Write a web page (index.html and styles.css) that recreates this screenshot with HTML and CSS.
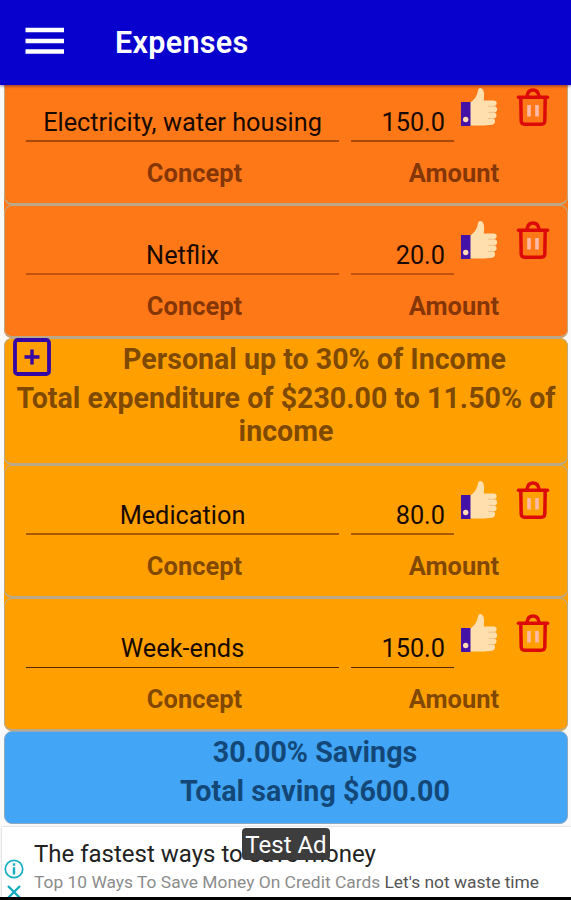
FILE: index.html
```html
<!DOCTYPE html>
<html lang="en">
<head>
<meta charset="utf-8">
<title>Expenses</title>
<link rel="stylesheet" href="styles.css">
</head>
<body>
<svg class="defs" width="0" height="0">
  <symbol id="thumb" viewBox="0 0 38 40">
    <path fill="#ffdfae" d="M10 15.5 C14 13 17 10 18 3 Q18.4 1 20.5 1 C24.5 1.5 24.5 8 23.7 13.5 H34 Q37 14 36.7 16.5 Q36.4 18.6 34.5 19 Q37.4 20 37.2 22.6 Q37 25 34.8 25.4 Q37 26.5 36.6 29 Q36 31.2 33.7 31.4 Q35.5 32.6 35 35 Q34.4 37.5 32 37.8 L24 38.5 H10 Z"/>
    <path fill="none" stroke="#ecc18b" stroke-width="1" d="M28 19.2 H35 M28.5 25.4 H35 M28 31.5 H34"/>
    <rect x="1" y="15" width="9.5" height="24" fill="#4512a8"/>
    <circle cx="5.7" cy="32.5" r="2.7" fill="#ffd9b5"/>
  </symbol>
  <symbol id="trash" viewBox="0 0 34 40">
    <g fill="none" stroke="#dd0a0a" stroke-width="3.5" stroke-linecap="round">
      <path d="M2.5 10.2 H31.5"/>
      <path d="M11 9 Q12 3 17 3 Q22 3 23 9"/>
      <path stroke-linejoin="round" d="M4.8 11 L5.2 34 Q5.4 37.2 8.6 37.2 H25.4 Q28.6 37.2 28.8 34 L29.2 11"/>
    </g>
    <path stroke="#ffb9a8" stroke-width="3.6" d="M13 18 V29.5 M21 18 V29.5"/>
  </symbol>
</svg>
<header class="bar">
  <svg class="menu" viewBox="0 0 40 28"><path stroke="#fff" stroke-width="4.4" d="M0.5 3 H39 M0.5 14 H39 M0.5 24.5 H39"/></svg>
  <h1 class="title">Expenses</h1>
</header>
<main class="list">
  <div class="block deep">
    <section class="card item">
      <div class="fields">
        <div class="field concept">Electricity, water housing</div>
        <div class="field amount">150.0</div>
        <svg class="thumb"><use href="#thumb"/></svg>
        <svg class="trash"><use href="#trash"/></svg>
      </div>
      <div class="labels"><span class="l-concept">Concept</span><span class="l-amount">Amount</span></div>
    </section>
    <section class="card item">
      <div class="fields soft">
        <div class="field concept">Netflix</div>
        <div class="field amount">20.0</div>
        <svg class="thumb"><use href="#thumb"/></svg>
        <svg class="trash"><use href="#trash"/></svg>
      </div>
      <div class="labels"><span class="l-concept">Concept</span><span class="l-amount">Amount</span></div>
    </section>
  </div>
  <div class="block amber">
    <section class="card group">
      <div class="group-head">
        <svg class="add" viewBox="0 0 38 38"><rect x="2" y="2" width="34" height="34" rx="2.5" fill="none" stroke="#3505a5" stroke-width="3.8"/><path stroke="#3505a5" stroke-width="3.4" d="M11.5 19 H26.5 M19 11.5 V26.5"/></svg>
        <h2 class="group-title">Personal up to 30% of Income</h2>
      </div>
      <p class="group-total">Total expenditure of $230.00 to 11.50% of income</p>
    </section>
    <section class="card item">
      <div class="fields">
        <div class="field concept">Medication</div>
        <div class="field amount">80.0</div>
        <svg class="thumb"><use href="#thumb"/></svg>
        <svg class="trash"><use href="#trash"/></svg>
      </div>
      <div class="labels"><span class="l-concept">Concept</span><span class="l-amount">Amount</span></div>
    </section>
    <section class="card item">
      <div class="fields crisp">
        <div class="field concept">Week-ends</div>
        <div class="field amount">150.0</div>
        <svg class="thumb"><use href="#thumb"/></svg>
        <svg class="trash"><use href="#trash"/></svg>
      </div>
      <div class="labels"><span class="l-concept">Concept</span><span class="l-amount">Amount</span></div>
    </section>
  </div>
  <section class="card savings">
    <p>30.00% Savings</p>
    <p>Total saving $600.00</p>
  </section>
</main>
<footer class="ad">
  <div class="ad-icons">
    <svg class="info" viewBox="0 0 20 20"><circle cx="10" cy="10" r="8.7" fill="none" stroke="#18adc0" stroke-width="1.7"/><path stroke="#18adc0" stroke-width="2.4" d="M10 4.3 V6.8 M10 8.3 V15.5"/></svg>
    <svg class="close" viewBox="0 0 14 12"><path stroke="#18adc0" stroke-width="2.4" d="M1 1 L13 13 M13 1 L1 13"/></svg>
  </div>
  <div class="ad-text">
    <p class="ad-title">The fastest ways to save money</p>
    <p class="ad-sub">Top 10 Ways To Save Money On Credit Cards <span>Let's not waste time</span></p>
  </div>
  <div class="badge">Test Ad</div>
</footer>
</body>
</html>
```
FILE: styles.css
```css
* { box-sizing: border-box; margin: 0; padding: 0; }
body {
  width: 571px;
  height: 900px;
  overflow: hidden;
  background: #fafafa;
  font-family: Roboto, "Liberation Sans", sans-serif;
  display: flex;
  flex-direction: column;
}
svg { display: block; flex: none; }
.defs { position: absolute; }

.bar {
  position: relative;
  z-index: 2;
  flex: none;
  height: 85px;
  background: #0800cc;
  box-shadow: 0 1px 3px rgba(60, 0, 60, .6);
  display: flex;
  align-items: center;
  padding-left: 25px;
}
.menu { width: 40px; height: 28px; margin-top: -3px; }
.title { margin: 1px 0 0 50px; color: #fff; font-size: 30.5px; font-weight: 600; line-height: 34px; letter-spacing: .3px; }

.list { flex: none; margin: -13px 3px 0 4px; }
.block { border-radius: 8px; overflow: hidden; }
.card { border: 1px solid #b9a98a; border-bottom-width: 2px; border-radius: 8px; }
.deep { background: #ff7817; }
.amber { background: #ffa000; }

.item { height: 133px; padding: 14px 0 0 21px; }
.fields { display: flex; height: 56px; }
.field {
  height: 55px;
  border-bottom: 2px solid rgba(110, 40, 10, .6);
  font-size: 25.3px;
  line-height: 30px;
  padding-top: 21px;
  color: #180a02;
  white-space: nowrap;
}
.soft .field { border-color: rgba(150, 55, 10, .6); }
.crisp .field { border-bottom: 1px solid #5e2600; }
.concept { width: 313px; text-align: center; }
.amount { width: 103px; margin-left: 12px; padding-right: 9px; text-align: right; }
.thumb { width: 38px; height: 40px; margin-left: 6px; }
.trash { width: 34px; height: 40px; margin-left: 18px; }

.labels {
  display: flex;
  font-size: 25.5px;
  line-height: 30px;
  font-weight: 700;
  color: rgba(70, 20, 0, .68);
  padding-top: 15px;
}
.amber .labels { color: rgba(66, 26, 0, .68); }
.l-concept { width: 338px; padding-right: 1px; text-align: center; }
.l-amount { width: 180px; text-align: center; }

.group { height: 127px; color: rgba(60, 28, 0, .68); font-weight: 700; }
.group-head { display: flex; padding-left: 8px; height: 38px; }
.add { width: 38px; height: 38px; margin-top: -1px; }
.group-title { flex: 1; padding: 4px 0 0 11px; text-align: center; font-size: 28.6px; line-height: 33px; white-space: nowrap; }
.group-total { font-size: 28.6px; line-height: 33px; text-align: center; padding-top: 5px; }

.savings {
  height: 93px;
  background: #42a5f5;
  border-color: #91a9bd;
  border-width: 1px;
  padding: 4px 0 0 58px;
  text-align: center;
  font-size: 28.7px;
  font-weight: 700;
  line-height: 33px;
  color: rgba(0, 35, 70, .72);
}
.savings p + p { margin-top: 6px; }

.ad {
  position: relative;
  flex: none;
  height: 70px;
  margin: 3px 0 0 2px;
  background: #fff;
  box-shadow: 0 0 2px rgba(0, 0, 0, .25);
  display: flex;
}
.ad::after { content: ""; position: absolute; left: -2px; right: 0; top: 70px; height: 3px; background: #000; }
.ad-icons { width: 32px; padding: 32px 0 0 2px; }
.info { width: 20px; height: 20px; }
.close { width: 14px; height: 12px; margin: 6px 0 0 3px; }
.ad-title { padding-top: 12px; font-size: 24px; line-height: 30px; color: #222; white-space: nowrap; }
.ad-sub { padding-top: 3px; font-size: 17.4px; line-height: 20px; color: #8c8c8c; white-space: nowrap; }
.ad-sub span { color: #555; }
.badge {
  position: absolute;
  left: 240px;
  top: 1px;
  width: 88px;
  height: 32px;
  border-radius: 4px;
  background: #3d3d3d;
  color: #fff;
  font-size: 24px;
  line-height: 35px;
  text-align: center;
  white-space: nowrap;
}
```
